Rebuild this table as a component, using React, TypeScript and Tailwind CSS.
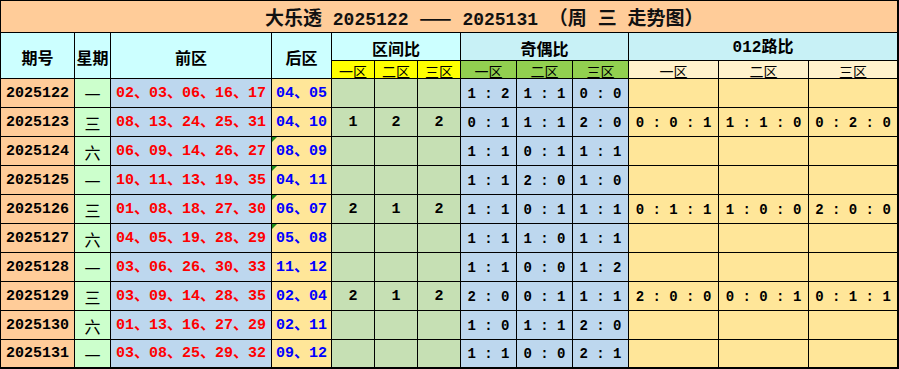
const mono = "font-['Liberation_Mono','Noto_Sans_CJK_SC',monospace]";
const cjk = "font-['Noto_Sans_CJK_SC','Liberation_Sans',sans-serif]";

type Row = {
  issue: string;
  day: string;
  front: string;
  back: string;
  zone: string[];
  odd: string[];
  road: string[];
  flag?: boolean;
};

const E = ["", "", ""];

const rows: Row[] = [
  { issue: "2025122", day: "一", front: "02、03、06、16、17", back: "04、05", zone: E, odd: ["1 : 2", "1 : 1", "0 : 0"], road: E },
  { issue: "2025123", day: "三", front: "08、13、24、25、31", back: "04、10", zone: ["1", "2", "2"], odd: ["0 : 1", "1 : 1", "2 : 0"], road: ["0 : 0 : 1", "1 : 1 : 0", "0 : 2 : 0"] },
  { issue: "2025124", day: "六", front: "06、09、14、26、27", back: "08、09", zone: E, odd: ["1 : 1", "0 : 1", "1 : 1"], road: E, flag: true },
  { issue: "2025125", day: "一", front: "10、11、13、19、35", back: "04、11", zone: E, odd: ["1 : 1", "2 : 0", "1 : 0"], road: E, flag: true },
  { issue: "2025126", day: "三", front: "01、08、18、27、30", back: "06、07", zone: ["2", "1", "2"], odd: ["1 : 1", "0 : 1", "1 : 1"], road: ["0 : 1 : 1", "1 : 0 : 0", "2 : 0 : 0"], flag: true },
  { issue: "2025127", day: "六", front: "04、05、19、28、29", back: "05、08", zone: E, odd: ["1 : 1", "1 : 0", "1 : 1"], road: E, flag: true },
  { issue: "2025128", day: "一", front: "03、06、26、30、33", back: "11、12", zone: E, odd: ["1 : 1", "0 : 0", "1 : 2"], road: E },
  { issue: "2025129", day: "三", front: "03、09、14、28、35", back: "02、04", zone: ["2", "1", "2"], odd: ["2 : 0", "0 : 1", "1 : 1"], road: ["2 : 0 : 0", "0 : 0 : 1", "0 : 1 : 1"] },
  { issue: "2025130", day: "六", front: "01、13、16、27、29", back: "02、11", zone: E, odd: ["1 : 0", "1 : 1", "2 : 0"], road: E },
  { issue: "2025131", day: "一", front: "03、08、25、29、32", back: "09、12", zone: E, odd: ["1 : 1", "0 : 0", "2 : 1"], road: E },
];

const cell = "flex items-center justify-center pt-[2px] whitespace-nowrap";
const zh = `text-[19px] ${cjk}`;

export default function App() {
  return (
    <div className="h-[369px] w-[899px] overflow-hidden bg-white">
      <div className="grid grid-cols-[73px_35px_160px_59px_42px_42px_42px_55px_55px_55px_89px_89px_88px] grid-rows-[31px_27px_17px_repeat(9,28px)_27px] gap-px border-t border-l border-r-2 border-b-2 border-black bg-black">
        {/* title */}
        <div className={`col-span-13 flex items-center bg-[#ffcc99] pt-[4px] pl-[264px] text-[18px] font-bold text-[#111] ${mono}`}>
          <span className="whitespace-pre">
            <span className={zh}>大乐透</span> 2025122 <span className={zh}>——</span> 2025131 <span className={zh}>（周</span> <span className={zh}>三</span> <span className={zh}>走势图）</span>
          </span>
        </div>

        {/* header */}
        <div className={`row-span-2 bg-[#ccffff] text-[16px] font-bold ${cell} ${cjk}`}>期号</div>
        <div className={`row-span-2 bg-[#ccffff] text-[16px] font-bold ${cell} ${cjk}`}>星期</div>
        <div className={`row-span-2 bg-[#ccffff] text-[16px] font-bold ${cell} ${cjk}`}>前区</div>
        <div className={`row-span-2 bg-[#ccffff] text-[16px] font-bold ${cell} ${cjk}`}>后区</div>
        <div className={`col-span-3 bg-[#ccffff] text-[16px] font-bold ${cell} ${cjk}`}>区间比</div>
        <div className={`col-span-3 bg-[#c8f1f6] text-[16px] font-bold ${cell} ${cjk}`}>奇偶比</div>
        <div className={`col-span-3 bg-[#c8f1f6] text-[16px] font-bold ${cell} ${mono}`}>012路比</div>

        {["一区", "二区", "三区"].map((z) => (
          <div key={"a" + z} className={`bg-[#ffff00] text-[14px] leading-none underline underline-offset-1 ${cell} ${cjk}`}>{z}</div>
        ))}
        {["一区", "二区", "三区"].map((z) => (
          <div key={"b" + z} className={`bg-[#92d050] text-[14px] leading-none underline underline-offset-1 ${cell} ${cjk}`}>{z}</div>
        ))}
        {["一区", "二区", "三区"].map((z) => (
          <div key={"c" + z} className={`bg-[#fff2cc] text-[14px] leading-none underline underline-offset-1 ${cell} ${cjk}`}>{z}</div>
        ))}

        {/* rows */}
        {rows.map((r) => (
          <Line key={r.issue} r={r} />
        ))}
      </div>
    </div>
  );
}

function Line({ r }: { r: Row }) {
  return (
    <>
      <div className={`bg-[#ffcc99] text-[15px] font-bold text-black ${cell} ${mono}`}>{r.issue}</div>
      <div className={`bg-[#ccffcc] text-[16px] text-black ${cell} ${cjk}`}>{r.day}</div>
      <div className={`bg-[#bdd7ee] text-[15px] font-bold text-[#ff0000] ${cell} ${mono}`}>{r.front}</div>
      <div className={`relative bg-[#ffe699] text-[15px] font-bold text-[#0000ff] ${cell} ${mono}`}>
        {r.flag && (
          <span className="absolute top-0 left-0 h-0 w-0 border-t-[5px] border-r-[5px] border-t-[#1a8a1a] border-r-transparent" />
        )}
        {r.back}
      </div>
      {r.zone.map((v, i) => (
        <div key={"z" + i} className={`bg-[#c6e0b4] text-[15px] font-bold text-black ${cell} ${mono}`}>{v}</div>
      ))}
      {r.odd.map((v, i) => (
        <div key={"o" + i} className={`bg-[#bdd7ee] text-[14px] font-bold text-black ${cell} ${mono}`}>{v}</div>
      ))}
      {r.road.map((v, i) => (
        <div key={"r" + i} className={`bg-[#ffe699] text-[14px] font-bold text-black ${cell} ${mono}`}>{v}</div>
      ))}
    </>
  );
}
